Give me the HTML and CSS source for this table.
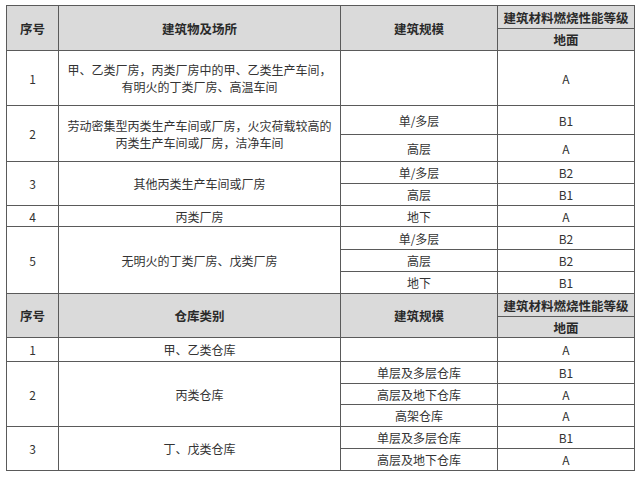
FILE: index.html
```html
<!DOCTYPE html>
<html lang="zh">
<head>
<meta charset="utf-8">
<link rel="stylesheet" href="styles.css">
</head>
<body>
<table class="spec">
  <colgroup>
    <col class="c1"><col class="c2"><col class="c3"><col class="c4">
  </colgroup>
  <tr class="r23"><th rowspan="2">序号</th><th rowspan="2">建筑物及场所</th><th rowspan="2">建筑规模</th><th>建筑材料燃烧性能等级</th></tr>
  <tr class="r22"><th>地面</th></tr>
  <tr class="r55"><td>1</td><td>甲、乙类厂房，丙类厂房中的甲、乙类生产车间，<br>有明火的丁类厂房、高温车间</td><td></td><td>A</td></tr>
  <tr class="r29"><td rowspan="2">2</td><td rowspan="2">劳动密集型丙类生产车间或厂房，火灾荷载较高的<br>丙类生产车间或厂房，洁净车间</td><td>单/多层</td><td>B1</td></tr>
  <tr class="r27"><td>高层</td><td>A</td></tr>
  <tr class="r22"><td rowspan="2">3</td><td rowspan="2">其他丙类生产车间或厂房</td><td>单/多层</td><td>B2</td></tr>
  <tr class="r22"><td>高层</td><td>B1</td></tr>
  <tr class="r21"><td>4</td><td>丙类厂房</td><td>地下</td><td>A</td></tr>
  <tr class="r23"><td rowspan="3">5</td><td rowspan="3">无明火的丁类厂房、戊类厂房</td><td>单/多层</td><td>B2</td></tr>
  <tr class="r22"><td>高层</td><td>B2</td></tr>
  <tr class="r22"><td>地下</td><td>B1</td></tr>
  <tr class="r23"><th rowspan="2">序号</th><th rowspan="2">仓库类别</th><th rowspan="2">建筑规模</th><th>建筑材料燃烧性能等级</th></tr>
  <tr class="r21"><th>地面</th></tr>
  <tr class="r24"><td>1</td><td>甲、乙类仓库</td><td></td><td>A</td></tr>
  <tr class="r22"><td rowspan="3">2</td><td rowspan="3">丙类仓库</td><td>单层及多层仓库</td><td>B1</td></tr>
  <tr class="r21"><td>高层及地下仓库</td><td>A</td></tr>
  <tr class="r22"><td>高架仓库</td><td>A</td></tr>
  <tr class="r22"><td rowspan="2">3</td><td rowspan="2">丁、戊类仓库</td><td>单层及多层仓库</td><td>B1</td></tr>
  <tr class="r22"><td>高层及地下仓库</td><td>A</td></tr>
</table>
</body>
</html>
```

FILE: styles.css
```css
html, body {
  margin: 0;
  padding: 0;
  background: #ffffff;
}
body {
  padding: 5px 0 0 6px;
  font-family: "Noto Sans CJK SC", "Noto Sans", sans-serif;
  color: #333333;
}
.spec {
  border-collapse: collapse;
  table-layout: fixed;
  width: 628px;
  font-size: 12px;
  line-height: 17px;
}
.c1 { width: 52px; }
.c2 { width: 282px; }
.c3 { width: 157px; }
.c4 { width: 137px; }
.spec th, .spec td {
  border: 1px solid #5a5a5a;
  padding: 0;
  text-align: center;
  vertical-align: middle;
  overflow: hidden;
  white-space: nowrap;
}
.spec th {
  background: #dadada;
  font-weight: 700;
  color: #2a2a2a;
  font-size: 12.5px;
}
.r55 { height: 55px; }
.r29 { height: 29px; }
.r27 { height: 27px; }
.r24 { height: 24px; }
.r23 { height: 23px; }
.r22 { height: 22px; }
.r21 { height: 21px; }
```
